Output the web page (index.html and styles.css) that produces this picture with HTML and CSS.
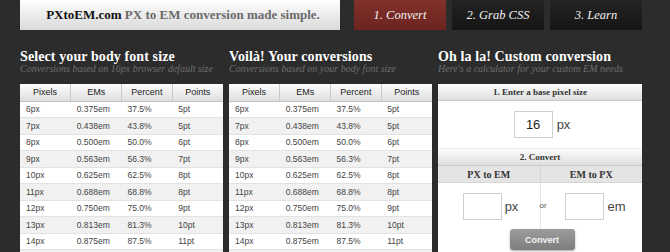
FILE: index.html
```html
<!DOCTYPE html>
<html>
<head>
    <title>PXtoEM.com</title>
    <link rel="stylesheet" href="styles.css">
</head>
<body>
    <div class="page">
        <div class="topbar">
            <div class="brand"><b>PXtoEM.com</b> <span>PX to EM conversion made simple.</span></div>
            <div class="tabs">
                <a class="tab active">1. Convert</a>
                <a class="tab">2. Grab CSS</a>
                <a class="tab">3. Learn</a>
            </div>
        </div>

        <div class="columns">
            <div class="column">
                <h2>Select your body font size</h2>
                <p class="sub">Conversions based on 16px browser default size</p>
                <table class="grid">
                    <thead>
                        <tr><th>Pixels</th><th>EMs</th><th>Percent</th><th>Points</th></tr>
                    </thead>
                    <tbody>
                        <tr><td>6px</td><td>0.375em</td><td>37.5%</td><td>5pt</td></tr>
                        <tr><td>7px</td><td>0.438em</td><td>43.8%</td><td>5pt</td></tr>
                        <tr><td>8px</td><td>0.500em</td><td>50.0%</td><td>6pt</td></tr>
                        <tr><td>9px</td><td>0.563em</td><td>56.3%</td><td>7pt</td></tr>
                        <tr><td>10px</td><td>0.625em</td><td>62.5%</td><td>8pt</td></tr>
                        <tr><td>11px</td><td>0.688em</td><td>68.8%</td><td>8pt</td></tr>
                        <tr><td>12px</td><td>0.750em</td><td>75.0%</td><td>9pt</td></tr>
                        <tr><td>13px</td><td>0.813em</td><td>81.3%</td><td>10pt</td></tr>
                        <tr><td>14px</td><td>0.875em</td><td>87.5%</td><td>11pt</td></tr>
                        <tr class="more"><td></td><td></td><td></td><td></td></tr>
                    </tbody>
                </table>
            </div>

            <div class="column">
                <h2>Voilà! Your conversions</h2>
                <p class="sub">Conversions based on your body font size</p>
                <table class="grid">
                    <thead>
                        <tr><th>Pixels</th><th>EMs</th><th>Percent</th><th>Points</th></tr>
                    </thead>
                    <tbody>
                        <tr><td>6px</td><td>0.375em</td><td>37.5%</td><td>5pt</td></tr>
                        <tr><td>7px</td><td>0.438em</td><td>43.8%</td><td>5pt</td></tr>
                        <tr><td>8px</td><td>0.500em</td><td>50.0%</td><td>6pt</td></tr>
                        <tr><td>9px</td><td>0.563em</td><td>56.3%</td><td>7pt</td></tr>
                        <tr><td>10px</td><td>0.625em</td><td>62.5%</td><td>8pt</td></tr>
                        <tr><td>11px</td><td>0.688em</td><td>68.8%</td><td>8pt</td></tr>
                        <tr><td>12px</td><td>0.750em</td><td>75.0%</td><td>9pt</td></tr>
                        <tr><td>13px</td><td>0.813em</td><td>81.3%</td><td>10pt</td></tr>
                        <tr><td>14px</td><td>0.875em</td><td>87.5%</td><td>11pt</td></tr>
                        <tr class="more"><td></td><td></td><td></td><td></td></tr>
                    </tbody>
                </table>
            </div>

            <div class="column custom">
                <h2>Oh la la! Custom conversion</h2>
                <p class="sub">Here's a calculator for your custom EM needs</p>
                <div class="panel">
                    <div class="panel-head">1. Enter a base pixel size</div>
                    <div class="base-row">
                        <input class="box" type="text" value="16"> <span class="unit">px</span>
                    </div>
                    <div class="panel-head">2. Convert</div>
                    <div class="split-head">
                        <div>PX to EM</div>
                        <div>EM to PX</div>
                    </div>
                    <div class="split-body">
                        <div class="half">
                            <input class="box" type="text"> <span class="unit">px</span>
                        </div>
                        <span class="or">or</span>
                        <div class="half">
                            <input class="box" type="text"> <span class="unit">em</span>
                        </div>
                    </div>
                    <div class="button-row">
                        <button class="convert">Convert</button>
                    </div>
                </div>
            </div>
        </div>
    </div>
</body>
</html>
```

FILE: styles.css
```css
html, body {
    margin: 0;
    padding: 0;
    background: #2c2c2c;
    overflow: hidden;
}
.page {
    padding-left: 20px;
    width: 622px;
    font-family: "Liberation Sans", Arial, sans-serif;
}
.topbar {
    display: flex;
    height: 30px;
}
.brand {
    width: 320px;
    height: 30px;
    line-height: 30px;
    text-align: center;
    background: linear-gradient(#fefefe, #dadada);
    font-family: "Liberation Serif", Georgia, serif;
    font-weight: bold;
    font-size: 13px;
    color: #111;
    padding-left: 6px;
    box-sizing: border-box;
}
.brand span {
    color: #6a6a6a;
}
.tabs {
    display: flex;
    gap: 6px;
    margin-left: 14px;
}
.tab {
    width: 92px;
    height: 30px;
    line-height: 30px;
    text-align: center;
    color: #f2f2f2;
    font-family: "Liberation Serif", Georgia, serif;
    font-style: italic;
    font-size: 12.5px;
    background: linear-gradient(#242424, #151515);
}
.tab.active {
    background: linear-gradient(#823029, #6b2420);
}
.columns {
    display: flex;
    gap: 6px;
    margin-top: 20px;
}
.column {
    width: 203px;
    height: 202px;
    overflow: hidden;
}
.column.custom {
    width: 204px;
}
h2 {
    margin: 0;
    font-family: "Liberation Serif", Georgia, serif;
    font-weight: bold;
    font-size: 14px;
    line-height: 14px;
    color: #fff;
    white-space: nowrap;
    letter-spacing: 0.1px;
}
.sub {
    margin: 0;
    font-family: "Liberation Serif", Georgia, serif;
    font-style: italic;
    font-size: 10px;
    line-height: 10px;
    color: #6e6e6e;
    white-space: nowrap;
}
.grid {
    margin-top: 10px;
    width: 203px;
    border-collapse: collapse;
    table-layout: fixed;
    background: #fff;
    font-size: 8.5px;
    color: #444;
}
.grid th {
    height: 17px;
    padding: 0;
    font-weight: normal;
    font-size: 9px;
    color: #222;
    background: linear-gradient(#fdfdfd, #dedede);
    border-left: 1px solid #c9c9c9;
    border-bottom: 1px solid #c4c4c4;
    box-sizing: border-box;
}
.grid th:first-child {
    border-left: none;
}
.grid td {
    height: 16.5px;
    padding: 0 0 0 6px;
    border-bottom: 1px solid #e2e2e2;
    box-sizing: border-box;
}
.grid tbody tr:nth-child(even) td {
    background: #f1f1f1;
}
.panel {
    margin-top: 10px;
    background: #fff;
}
.panel-head {
    height: 17px;
    line-height: 17px;
    text-align: center;
    font-family: "Liberation Serif", Georgia, serif;
    font-weight: bold;
    font-size: 9px;
    color: #333;
    background: linear-gradient(#fdfdfd, #dedede);
    border-bottom: 1px solid #c9c9c9;
    box-sizing: border-box;
}
.base-row {
    height: 48px;
    display: flex;
    align-items: center;
    justify-content: center;
    gap: 4px;
    padding-left: 4px;
    border-bottom: 1px solid #ececec;
    box-sizing: border-box;
}
.box {
    width: 39px;
    height: 27px;
    box-sizing: border-box;
    border: 1px solid #cfcfcf;
    background: #fff;
    padding: 0;
    text-align: center;
    font-family: "Liberation Sans", Arial, sans-serif;
    font-size: 13px;
    color: #222;
    outline: none;
}
.unit {
    font-size: 13px;
    color: #444;
}
.split-head {
    display: flex;
    height: 17px;
    background: #e4e4e4;
    border-bottom: 1px solid #d6d6d6;
    box-sizing: border-box;
}
.split-head div {
    flex: 1;
    text-align: center;
    line-height: 17px;
    font-family: "Liberation Serif", Georgia, serif;
    font-weight: bold;
    font-size: 10px;
    color: #333;
}
.split-head div + div {
    border-left: 1px solid #d4d4d4;
}
.split-body {
    display: flex;
    align-items: center;
    height: 46px;
    background: linear-gradient(to right, transparent 102px, #e6e6e6 102px, #e6e6e6 103px, transparent 103px);
}
.half {
    flex: 1;
    display: flex;
    align-items: center;
    justify-content: center;
    gap: 3px;
}
.half:first-child {
    padding-left: 6px;
}
.or {
    font-size: 8px;
    color: #555;
    width: 12px;
    text-align: center;
    margin-top: -2px;
}
.button-row {
    display: flex;
    justify-content: center;
    padding: 0 0 6px 4px;
}
.convert {
    width: 65px;
    height: 21px;
    border: none;
    border-radius: 3px;
    background: linear-gradient(#9c9c9c, #7e7e7e);
    color: #f4f4f4;
    font-family: "Liberation Sans", Arial, sans-serif;
    font-weight: bold;
    font-size: 9px;
    box-shadow: 0 1px 2px rgba(0,0,0,0.35);
}
```
